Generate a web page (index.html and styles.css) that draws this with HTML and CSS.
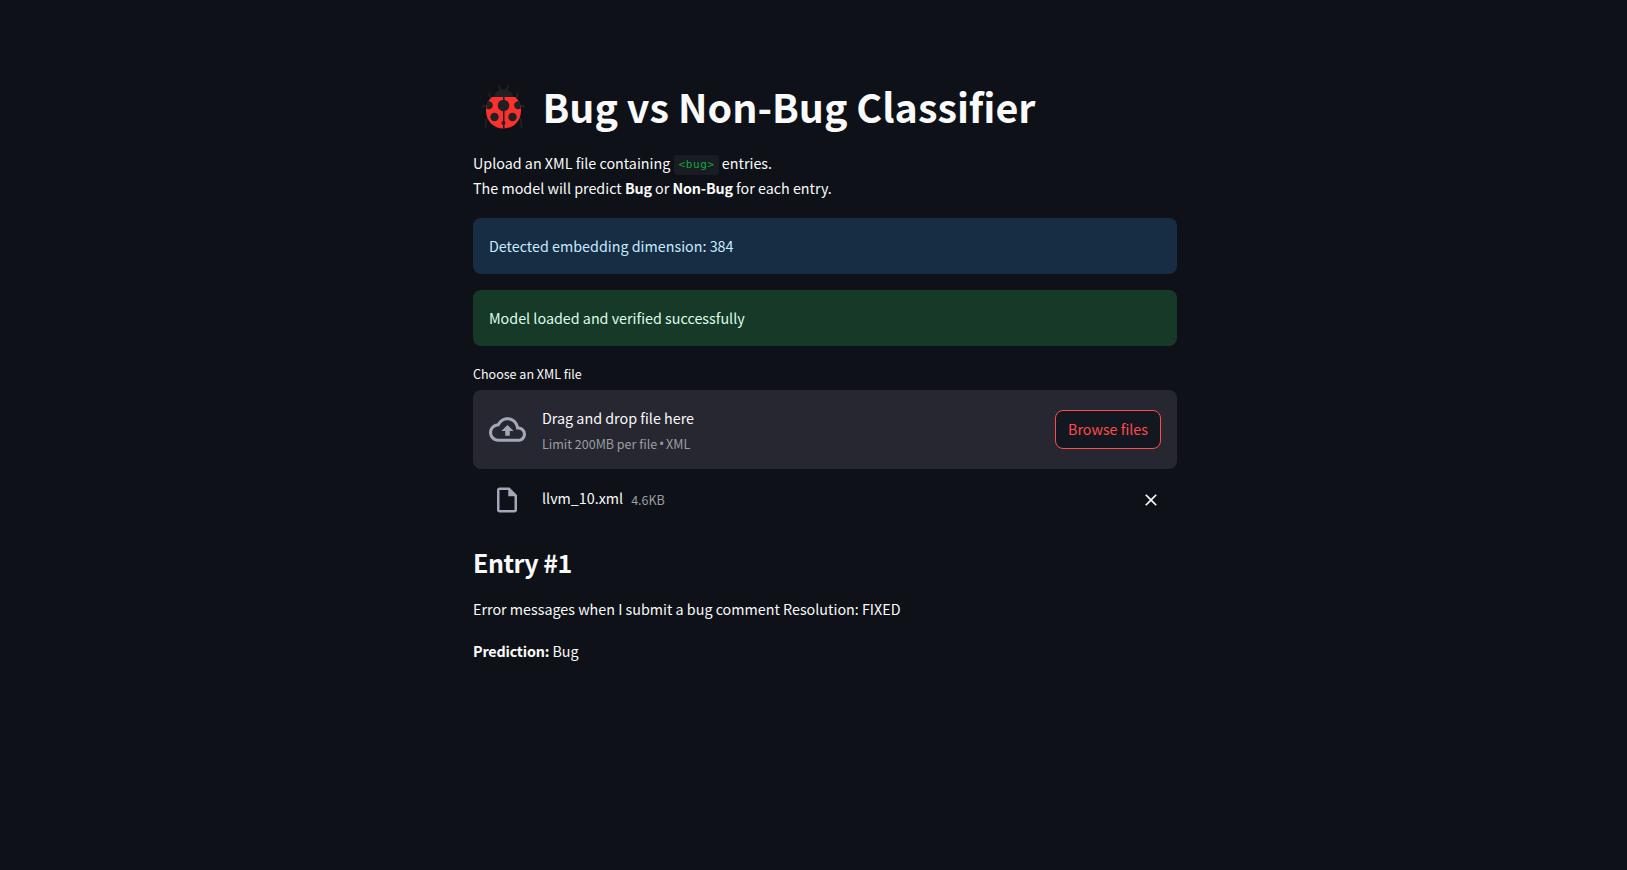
FILE: index.html
```html
<!DOCTYPE html>
<html lang="en">
<head>
<meta charset="utf-8">
<title>Bug vs Non-Bug Classifier</title>
<link rel="stylesheet" href="styles.css">
</head>
<body>
<main class="page">
  <h1 class="title">
    <svg class="ladybug" viewBox="0 0 60 60" aria-hidden="true">
      <g fill="none" stroke="#202122" stroke-width="1.8" stroke-linecap="round">
        <path d="M26.500 11L24 6.500Q23.500 6 23.300 5.500M30.500 11L33 6.500Q33.500 6 33.700 5.500"/>
        <path d="M18 20Q14.500 18 14.500 13.500M39 20Q42.500 18 42.500 13.500M14 27Q9.500 24 7.500 27M43 27Q47.500 24 49.500 27M14 36Q10.500 39 10.500 47M43 36Q46.500 39 46.500 47"/>
      </g>
      <path d="M18.500 18Q20 9.500 28.500 9.500T38.500 18Z" fill="#202122"/>
      <path d="M17 17H40Q46 22 46 30.500C46 41 38.500 48.500 28.500 48.500S11 41 11 30.500Q11 22 17 17Z" fill="#fc312e"/>
      <g fill="#202122">
        <path d="M28 17h1.500v32H28z"/>
        <circle cx="28.500" cy="25.500" r="5.800"/>
        <circle cx="19.500" cy="37" r="4.200"/><circle cx="37.500" cy="37" r="4.200"/>
        <path d="M12.500 21.500A4 4 0 1 1 11.500 28.500ZM44.500 21.500A4 4 0 1 0 45.500 28.500Z"/>
        <circle cx="28.500" cy="43" r="2"/>
      </g>
    </svg>
    <span class="title-text">Bug vs Non-Bug Classifier</span>
  </h1>
  <p class="text intro">Upload an XML file containing <code class="code">&lt;bug&gt;</code> entries.<br>The model will predict <strong>Bug</strong> or <strong>Non-Bug</strong> for each entry.</p>
  <div class="alert info">Detected embedding dimension: 384</div>
  <div class="alert success">Model loaded and verified successfully</div>
  <div class="label">Choose an XML file</div>
  <section class="dropzone">
    <svg class="cloud" viewBox="0 0 24 24" aria-hidden="true"><path d="M19.35 10.04C18.67 6.59 15.64 4 12 4 9.11 4 6.6 5.64 5.35 8.04 2.34 8.36 0 10.91 0 14c0 3.31 2.69 6 6 6h13c2.76 0 5-2.24 5-5 0-2.64-2.05-4.78-4.65-4.96zM19 18H6c-2.21 0-4-1.79-4-4 0-2.05 1.53-3.76 3.56-3.97l1.07-.11.5-.95C8.08 7.14 9.94 6 12 6c2.62 0 4.88 1.86 5.39 4.43l.3 1.5 1.53.11c1.56.1 2.78 1.41 2.78 2.96 0 1.65-1.35 3-3 3zM8 13h2.55v3h2.9v-3H16l-4-4z"/></svg>
    <div class="instructions">
      <span class="text">Drag and drop file here</span>
      <span class="small">Limit 200MB per file <span class="dot">•</span> XML</span>
    </div>
    <button class="browse" type="button">Browse files</button>
  </section>
  <div class="file">
    <svg class="doc" viewBox="0 0 24 24" aria-hidden="true"><path d="M14 2H6c-1.100 0-1.990.9-1.990 2L4 20c0 1.100.89 2 1.990 2H18c1.100 0 2-.9 2-2V8l-6-6zM6 20V4h7v5h5v11H6z"/></svg>
    <span class="text name">llvm_10.xml</span>
    <span class="small size">4.6KB</span>
    <button class="remove" type="button" aria-label="Remove file"><svg viewBox="0 0 24 24"><path d="M19 6.410 17.590 5 12 10.590 6.410 5 5 6.410 10.590 12 5 17.590 6.410 19 12 13.410 17.590 19 19 17.590 13.410 12z"/></svg></button>
  </div>
  <h3 class="entry">Entry #1</h3>
  <p class="text">Error messages when I submit a bug comment Resolution: FIXED</p>
  <p class="text prediction"><strong>Prediction:</strong> Bug</p>
</main>
</body>
</html>
```
FILE: styles.css
```css
* { box-sizing: border-box; }
body {
  margin: 0;
  min-height: 870px;
  background: #0e1117;
  color: #fafafa;
  font-family: "Noto Sans CJK SC", "Noto Sans", sans-serif;
  font-size: 14.32px;
  line-height: 25.6px;
}
.page {
  width: 704px;
  margin-left: 473px;
  padding-top: 82px;
  display: flex;
  flex-direction: column;
}
h1, h3, p { margin: 0; }
strong { letter-spacing: -0.17px; }
.title {
  display: flex;
  align-items: center;
  height: 53px;
  margin-bottom: 15px;
  font-size: 39.4px;
  line-height: 53px;
  font-weight: 700;
}
.ladybug { width: 60px; height: 60px; margin: 3px 7.5px 0 2px; flex: none; }
.title-text { white-space: nowrap; padding-bottom: 6px; }
.text { font-size: 14.32px; line-height: 25.6px; }
.intro { margin-bottom: 17px; height: 51px; line-height: 25px; }
.code {
  display: inline-block;
  height: 20px;
  padding: 0 4px 0 5px;
  border-radius: 4px;
  background: #1a1c24;
  color: #09ab3b;
  font-family: "DejaVu Sans Mono", monospace;
  font-size: 11px;
  line-height: 20px;
  letter-spacing: 0.6px;
  vertical-align: 1px;
  margin-block: -2px;
}
.alert {
  height: 56px;
  padding: 15px 16px;
  border-radius: 8px;
  margin-bottom: 16px;
}
.info { background: #172d43; color: #c7ebff; }
.success { background: #173928; color: #dffde9; }
.label { height: 28px; font-size: 12.53px; line-height: 24px; }
.dropzone {
  display: flex;
  align-items: center;
  height: 79px;
  padding: 16px;
  border-radius: 8px;
  background: #262730;
}
.cloud { width: 37px; height: 37px; fill: #a3a8b8; margin-right: 16px; }
.instructions { display: flex; flex-direction: column; flex: 1; padding-top: 3px; }
.small { font-size: 12.53px; color: #9c9da1; }
.dot { font-family: "Open Sans", sans-serif; font-size: 14px; line-height: 1; margin: 0 -1px; }
.browse {
  width: 106px;
  height: 39px;
  padding: 0 0 2px;
  border: 1px solid #ff4b4b;
  border-radius: 8px;
  background: #131720;
  color: #ff4b4b;
  font: inherit;
}
.file { display: flex; align-items: center; height: 62px; padding: 0 16px 0 19px; }
.doc { width: 30px; height: 30px; fill: #a3a8b8; margin-right: 20px; }
.name { padding-bottom: 4px; }
.size { margin-left: 8px; }
.remove {
  width: 20px;
  height: 20px;
  margin-left: auto;
  padding: 0;
  border: 0;
  background: none;
}
.remove svg { display: block; width: 20px; height: 20px; fill: #fafafa; }
.entry {
  margin: 15px 0 16px;
  font-size: 25.06px;
  line-height: 33.6px;
  font-weight: 600;
  letter-spacing: -0.5px;
}
.prediction { margin-top: 17px; }
```
